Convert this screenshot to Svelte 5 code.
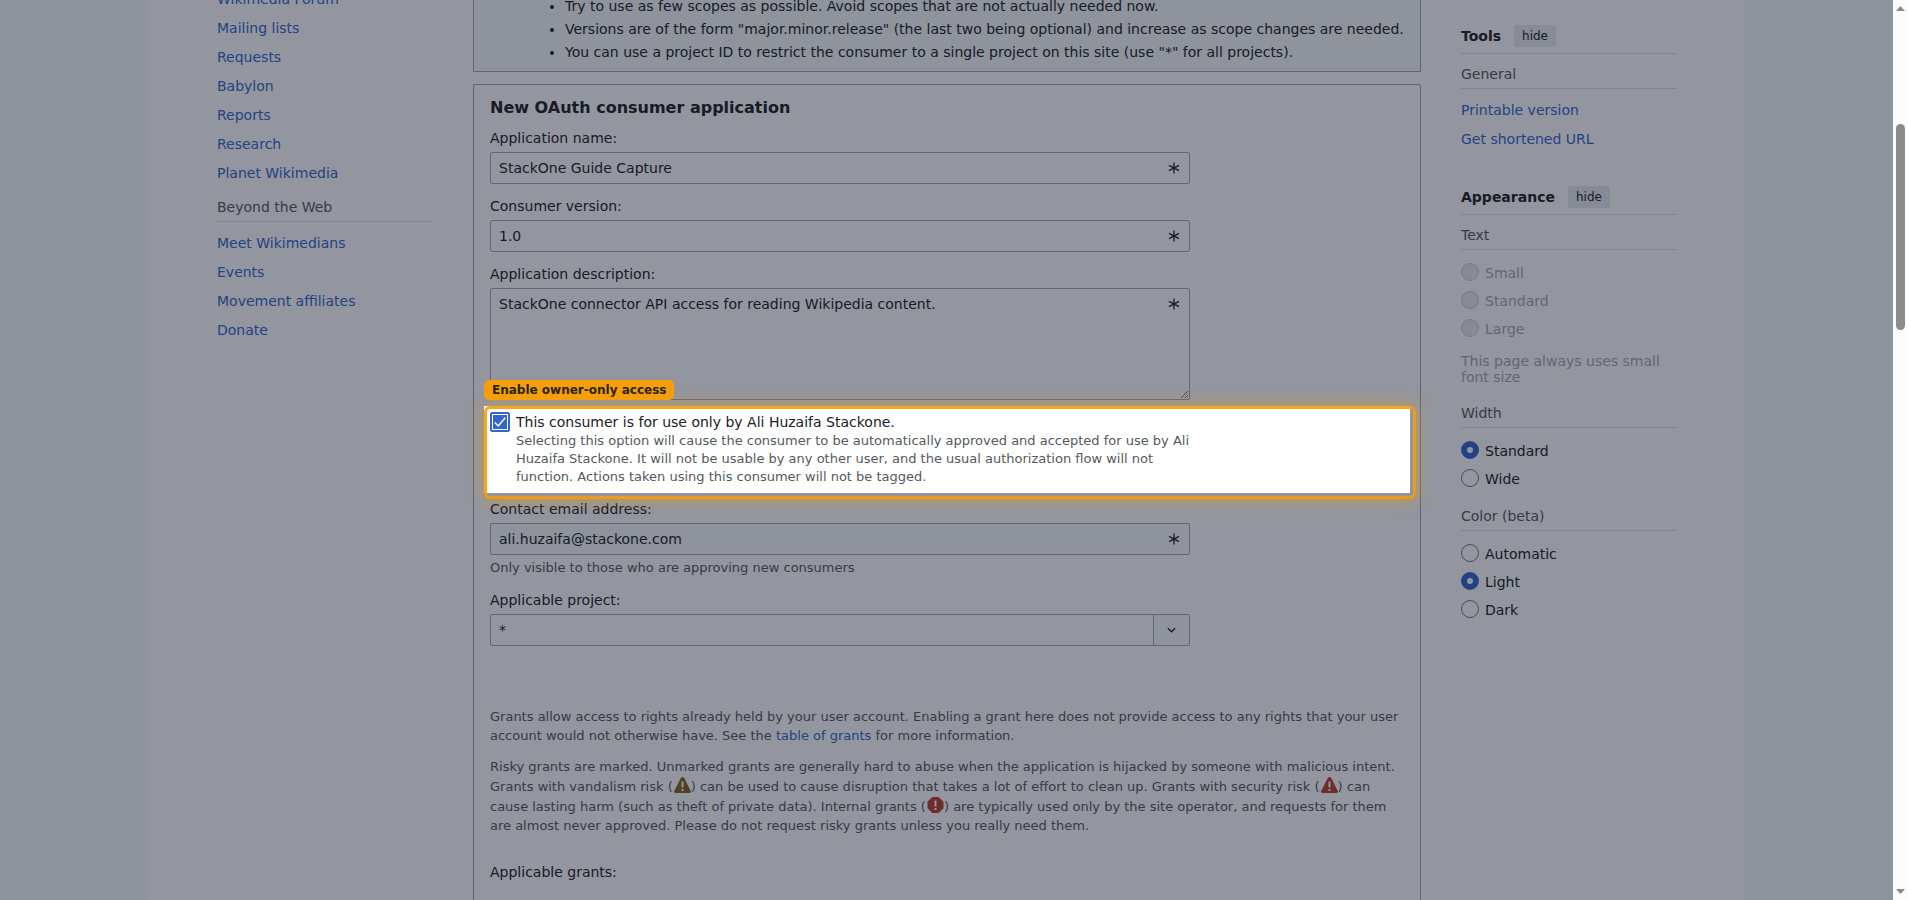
<script>
    const community = ['Wikimedia Forum', 'Mailing lists', 'Requests', 'Babylon', 'Reports', 'Research', 'Planet Wikimedia'];
    const beyond = ['Meet Wikimedians', 'Events', 'Movement affiliates', 'Donate'];
    const tools = ['Printable version', 'Get shortened URL'];

    const textSizes = ['Small', 'Standard', 'Large'];
    const widths = ['Standard', 'Wide'];
    const colors = ['Automatic', 'Light', 'Dark'];

    let name = $state('StackOne Guide Capture');
    let version = $state('1.0');
    let description = $state('StackOne connector API access for reading Wikipedia content.');
    let ownerOnly = $state(true);
    let email = $state('ali.huzaifa@stackone.com');
    let project = $state('*');
    let width = $state('Standard');
    let color = $state('Light');
</script>

{#snippet links(items)}
    <ul class="links">
        {#each items as item}
            <li><a href="#top">{item}</a></li>
        {/each}
    </ul>
{/snippet}

{#snippet star()}
    <svg class="star" viewBox="0 0 12 12" aria-hidden="true">
        <path d="M6 .5v11M1 3.400l10 5.200M11 3.400L1 8.600" />
    </svg>
{/snippet}

{#snippet triangle(kind)}
    <svg class="risk {kind}" viewBox="0 0 17 16" aria-hidden="true">
        <path d="M10.200 1 16.800 13.900Q17.300 16 15.300 16H1.700Q-.3 16 .2 13.900L6.800 1Q8.500-1 10.200 1z" />
        <path class="mark" d="M7.500 4.500h2v6h-2zM7.500 12h2v2h-2z" />
    </svg>
{/snippet}

<div class="window">
    <div class="viewport">
        <div class="page" id="top">
            <nav class="menu">
                {@render links(community)}
                <h3 class="heading">Beyond the Web</h3>
                {@render links(beyond)}
            </nav>

            <main>
                <div class="notice">
                    <ul>
                        <li>Try to use as few scopes as possible. Avoid scopes that are not actually needed now.</li>
                        <li>Versions are of the form "major.minor.release" (the last two being optional) and increase as scope changes are needed.</li>
                        <li>You can use a project ID to restrict the consumer to a single project on this site (use "*" for all projects).</li>
                    </ul>
                </div>

                <form class="panel">
                    <h2>New OAuth consumer application</h2>

                    <div class="field">
                        <label for="name">Application name:</label>
                        <div class="control">
                            <input id="name" type="text" bind:value={name}>
                            {@render star()}
                        </div>
                    </div>

                    <div class="field">
                        <label for="version">Consumer version:</label>
                        <div class="control">
                            <input id="version" type="text" bind:value={version}>
                            {@render star()}
                        </div>
                    </div>

                    <div class="field">
                        <label for="description">Application description:</label>
                        <div class="control">
                            <textarea id="description" bind:value={description}></textarea>
                            {@render star()}
                        </div>
                    </div>

                    <div class="field owner">
                        <div class="check">
                            <input id="owner" type="checkbox" bind:checked={ownerOnly}>
                            <svg viewBox="0 0 20 20" aria-hidden="true"><path d="M4.800 10.500 8.300 14 15.200 5.700" /></svg>
                        </div>
                        <div class="text">
                            <label for="owner">This consumer is for use only by Ali Huzaifa Stackone.</label>
                            <p>Selecting this option will cause the consumer to be automatically approved and accepted for use by Ali Huzaifa Stackone. It will not be usable by any other user, and the usual authorization flow will not function. Actions taken using this consumer will not be tagged.</p>
                        </div>
                        <div class="hole"></div>
                        <div class="ring"></div>
                        <div class="tag">Enable owner-only access</div>
                    </div>

                    <div class="field">
                        <label for="email">Contact email address:</label>
                        <div class="control">
                            <input id="email" type="email" readonly value={email}>
                            {@render star()}
                        </div>
                        <p class="help">Only visible to those who are approving new consumers</p>
                    </div>

                    <div class="field">
                        <label for="project">Applicable project:</label>
                        <div class="control combo">
                            <input id="project" type="text" bind:value={project}>
                            <button type="button" aria-label="Choose project">
                                <svg viewBox="0 0 10 6" aria-hidden="true"><path d="M1 1l4 4 4-4" /></svg>
                            </button>
                        </div>
                    </div>

                    <div class="info">
                        <p>Grants allow access to rights already held by your user account. Enabling a grant here does not provide access to any rights that your user account would not otherwise have. See the <a href="#top">table of grants</a> for more information.</p>
                        <p>Risky grants are marked. Unmarked grants are generally hard to abuse when the application is hijacked by someone with malicious intent. Grants with vandalism risk ({@render triangle('vandalism')}) can be used to cause disruption that takes a lot of effort to clean up. Grants with security risk ({@render triangle('security')}) can cause lasting harm (such as theft of private data). Internal grants (<svg class="risk internal" viewBox="0 0 17 16" aria-hidden="true"><path d="M5.300 0h6.400L16.500 4.700v6.600L11.700 16H5.300L.5 11.300V4.700z" /><path class="mark" d="M7.500 3.500h2v6h-2zM7.500 11h2v2h-2z" /></svg>) are typically used only by the site operator, and requests for them are almost never approved. Please do not request risky grants unless you really need them.</p>
                    </div>

                    <div class="grants">Applicable grants:</div>
                </form>
            </main>

            <aside class="side">
                <div class="title">
                    <strong>Tools</strong>
                    <button type="button">hide</button>
                </div>
                <h3 class="heading">General</h3>
                {@render links(tools)}

                <div class="title appearance">
                    <strong>Appearance</strong>
                    <button type="button">hide</button>
                </div>
                <h3 class="heading">Text</h3>
                <div class="options">
                    {#each textSizes as item}
                        <label class="option off"><input type="radio" name="size" disabled>{item}</label>
                    {/each}
                    <p class="note">This page always uses small font size</p>
                </div>
                <h3 class="heading">Width</h3>
                <div class="options">
                    {#each widths as item}
                        <label class="option"><input type="radio" name="width" value={item} bind:group={width}>{item}</label>
                    {/each}
                </div>
                <h3 class="heading">Color (beta)</h3>
                <div class="options">
                    {#each colors as item}
                        <label class="option"><input type="radio" name="color" value={item} bind:group={color}>{item}</label>
                    {/each}
                </div>
            </aside>
        </div>
    </div>

    <div class="scrollbar" aria-hidden="true">
        <svg viewBox="0 0 9 5"><path d="M0 5 4.500 0 9 5z" /></svg>
        <div class="track"><div class="thumb"></div></div>
        <svg viewBox="0 0 9 5"><path d="M0 0 4.500 5 9 0z" /></svg>
    </div>
</div>

<style>
    :global(body) {
        overflow: hidden;
        background: #f8f9fa;
    }
    * {
        box-sizing: border-box;
    }
    .window {
        display: flex;
        height: 100vh;
        color: #202122;
        font-family: "DejaVu Sans", sans-serif;
        font-size: 14px;
        line-height: 20px;
    }
    .viewport {
        flex: 1;
        min-width: 0;
        overflow: hidden;
        background: #f8f9fa;
    }
    .page {
        display: grid;
        grid-template-columns: 216px minmax(0, 1fr) 216px;
        gap: 40px;
        max-width: 1595px;
        min-height: 100vh;
        margin: 0 auto;
        padding: 0 67px 0 68px;
        background: #fff;
    }
    h2, h3, p, ul {
        margin: 0;
        padding: 0;
    }
    a {
        color: #36c;
        text-decoration: none;
    }
    input, textarea, button {
        margin: 0;
        color: inherit;
        font: inherit;
    }

    /* side menus */
    .menu, main {
        display: flex;
        flex-direction: column;
    }
    .menu {
        margin-top: -16px;
    }
    .links {
        padding-top: 1px;
        list-style: none;
        line-height: 29px;
    }
    .heading {
        padding: 10px 0 4px;
        border-bottom: 1px solid #dfe1e5;
        color: #54595d;
        font-size: 14px;
        font-weight: normal;
    }
    .links + .heading {
        padding-top: 9px;
    }
    .heading + .links {
        padding-top: 7px;
    }
    .side {
        padding-top: 25px;
    }
    .title {
        display: flex;
        align-items: center;
        gap: 13px;
        padding-bottom: 6px;
        border-bottom: 1px solid #dfe1e5;
    }
    .title button {
        height: 22px;
        padding: 0 8px;
        border: 0;
        border-radius: 2px;
        background: #eaecf0;
        font-size: 12px;
    }
    .appearance {
        margin-top: 32px;
    }
    .options {
        padding: 9px 0 3px;
    }
    .option {
        display: flex;
        align-items: center;
        gap: 6px;
        height: 28px;
    }
    .option input {
        appearance: none;
        width: 18px;
        height: 18px;
        margin-bottom: 2px;
        border: 1px solid #72777d;
        border-radius: 50%;
        background: #fff;
    }
    .option input:checked {
        border: 6px solid #36c;
    }
    .off, .note {
        color: #a2a9b1;
    }
    .option input:disabled {
        border-color: #c8ccd1;
        background: #eaecf0;
    }
    .note {
        padding: 10px 0 5px;
        line-height: 16px;
    }

    /* form */
    .notice {
        margin: -20px 0 12px;
        padding: 14px 8px 7px 91px;
        border: 1px solid #a2a9b1;
        background: #f8f9fa;
        line-height: 23px;
    }
    .panel {
        flex: 1;
        padding: 12px 16px 40px;
        border: 1px solid #a2a9b1;
        border-radius: 2px;
    }
    h2 {
        margin-bottom: 9px;
        font-size: 16px;
        line-height: 22px;
    }
    .field {
        margin-bottom: 12px;
    }
    .field > label {
        display: block;
        margin-bottom: 4px;
    }
    .control {
        position: relative;
        display: flex;
        max-width: 700px;
    }
    .control input, .control textarea {
        flex: 1;
        min-width: 0;
        height: 32px;
        padding: 5px 8px;
        border: 1px solid #a2a9b1;
        border-radius: 2px;
        background: #fff;
    }
    .control textarea {
        height: 112px;
        resize: vertical;
    }
    .control input:read-only {
        background: #f8f9fa;
    }
    .star {
        position: absolute;
        top: 10px;
        right: 10px;
        width: 12px;
        height: 12px;
        fill: none;
        stroke: #202122;
        stroke-width: 1.3;
    }
    .combo input {
        border-radius: 2px 0 0 2px;
    }
    .combo button {
        display: flex;
        align-items: center;
        justify-content: center;
        width: 36px;
        padding: 0;
        border: 1px solid #a2a9b1;
        border-left: 0;
        border-radius: 0 2px 2px 0;
        background: #f8f9fa;
    }
    .combo svg {
        width: 9px;
        height: 6px;
        fill: none;
        stroke: #202122;
        stroke-width: 1.5;
    }
    .help, .owner p {
        padding-bottom: 1px;
        color: #54595d;
        font-size: 13px;
        line-height: 18px;
    }
    .help {
        padding-top: 4px;
    }
    .owner {
        position: relative;
        z-index: 1;
        display: flex;
        gap: 6px;
    }
    .owner .text {
        max-width: 676px;
    }
    .owner label {
        display: block;
    }
    .check {
        display: grid;
        width: 20px;
        height: 20px;
    }
    .check input, .check svg {
        grid-area: 1 / 1;
        width: 20px;
        height: 20px;
    }
    .check input {
        appearance: none;
        border: 1px solid #36c;
        border-radius: 2px;
        box-shadow: inset 0 0 0 1px #36c, inset 0 0 0 2px #fff;
    }
    .check input:checked {
        background: #36c;
    }
    .check svg {
        fill: none;
        stroke: #fff;
        stroke-width: 1.5;
        pointer-events: none;
    }

    /* guide overlay: the hole's spread shadow dims everything round it */
    .hole, .ring, .tag {
        position: absolute;
        pointer-events: none;
    }
    .hole {
        inset: -6px;
        box-shadow: 0 0 0 3000px rgba(15, 23, 42, 0.45);
    }
    .ring {
        inset: -6px -12px -12px -6px;
        border: 3px solid #f59e0b;
        border-radius: 6px;
        box-shadow: 0 0 16px rgba(245, 158, 11, 0.6);
        opacity: 0.9;
    }
    .tag {
        bottom: calc(100% + 12px);
        left: -6px;
        padding: 0 8px;
        border-radius: 5px;
        background: #f59e0b;
        color: #2b2410;
        font-size: 12px;
        font-weight: bold;
        white-space: nowrap;
    }

    .info {
        padding-top: 49px;
        color: #54595d;
        font-size: 13px;
        line-height: 19px;
    }
    .info p + p {
        margin-top: 12px;
    }
    .risk {
        width: 17px;
        height: 16px;
        margin: 1px 0 0 1px;
        vertical-align: -2px;
    }
    .vandalism {
        fill: #886425;
    }
    .security, .internal {
        fill: #bf3c2c;
    }
    .mark {
        fill: #fff;
    }
    .grants {
        padding-top: 27px;
    }

    /* scrollbar */
    .scrollbar {
        display: flex;
        flex-direction: column;
        align-items: center;
        width: 15px;
        padding: 6px 0;
        background: #fcfcfc;
    }
    .scrollbar svg {
        width: 9px;
        height: 5px;
        fill: #8b8b8b;
    }
    .track {
        flex: 1;
        padding-top: 113px;
    }
    .thumb {
        width: 9px;
        height: 206px;
        border-radius: 5px;
        background: #8b8b8b;
    }
</style>
